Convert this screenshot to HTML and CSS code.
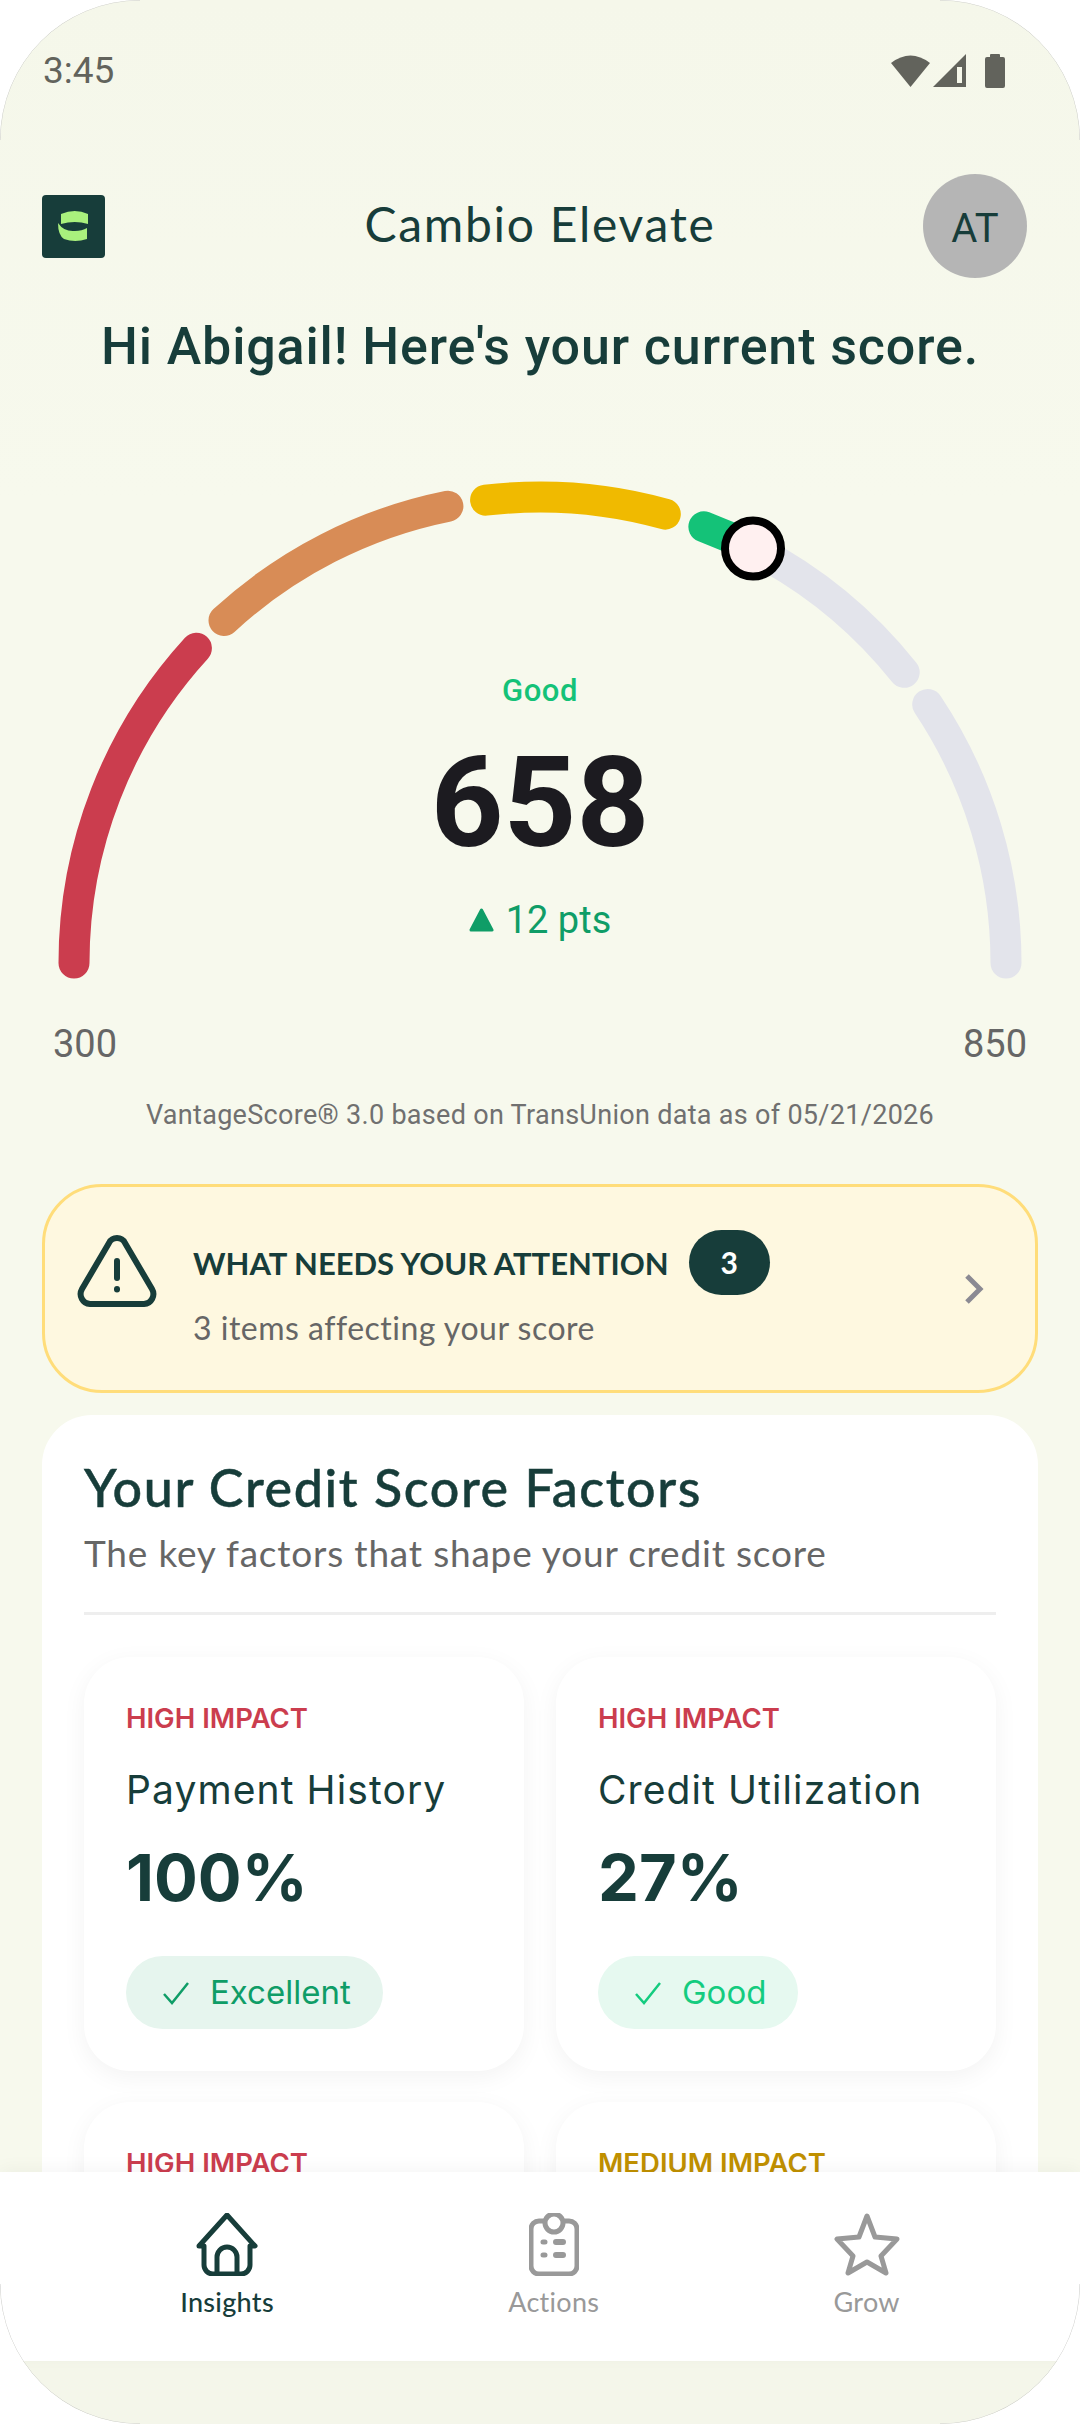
FILE: index.html
```html
<!DOCTYPE html>
<html lang="en">
  <head>
    <meta charset="UTF-8" />
    <meta name="viewport" content="width=device-width, initial-scale=1.0" />
    <title>Cambio Elevate</title>
    <link rel="stylesheet" href="styles.css">
  </head>
  <body>
    <div class="screen">
      <div class="scroll">
        <!-- status bar -->
        <div class="status-bar">
          <span class="time">3:45</span>
          <div class="status-icons">
            <svg class="icon-wifi" viewBox="0 0 39 33"><path d="M0 9 Q19.500 -6 39 9 L19.500 33 Z" /></svg>
            <svg class="icon-signal" viewBox="0 0 33 33">
              <path d="M33 0 V33 H0 Z" />
              <rect class="signal-gap" x="24" y="13" width="5" height="16" />
            </svg>
            <svg class="icon-battery" viewBox="0 0 20 34"><path d="M5 3 V1 a1 1 0 0 1 1 -1 h8 a1 1 0 0 1 1 1 v2 h3 a2 2 0 0 1 2 2 v27 a2 2 0 0 1 -2 2 H2 a2 2 0 0 1 -2 -2 V5 a2 2 0 0 1 2 -2 Z" /></svg>
          </div>
        </div>

        <!-- header -->
        <div class="top-bar">
          <svg class="logo" viewBox="0 0 63 63">
            <rect width="63" height="63" rx="4" fill="#173d3a" />
            <path d="M19 19 Q33 13 46 19 V29 Q33 25 19 29 Z" fill="#a9f07d" />
            <path d="M16 28 Q22 37 33 36 Q40 36 45 33 V44 Q33 48 22 44 Q16 40 16 28 Z" fill="#a9f07d" />
          </svg>
          <h1 class="app-title">Cambio Elevate</h1>
          <div class="avatar">AT</div>
        </div>

        <h2 class="greeting">Hi Abigail! Here's your current score.</h2>

        <!-- gauge -->
        <div class="gauge">
          <svg class="gauge-arc" viewBox="0 460 1080 540">
            <path class="seg" stroke="#cb3d4e" d="M74 963 A466 466 0 0 1 196.400 648.200" />
            <path class="seg" stroke="#d88c56" d="M224 620.500 A466 466 0 0 1 447.900 506.200" />
            <path class="seg" stroke="#f0ba00" d="M485.600 500.200 A466 466 0 0 1 665.300 514.100" />
            <path class="seg" stroke="#e3e4eb" d="M753 548.500 A466 466 0 0 1 904.200 672.300" />
            <path class="seg" stroke="#e3e4eb" d="M927.700 704.500 A466 466 0 0 1 1006 963" />
            <path class="seg" stroke="#14c278" d="M703.900 526.800 A466 466 0 0 1 753 548.500" />
            <circle cx="753" cy="548.500" r="28" fill="#fff0f0" stroke="#000" stroke-width="8" />
          </svg>
          <div class="gauge-center">
            <div class="gauge-label">Good</div>
            <div class="gauge-score">658</div>
            <div class="gauge-delta">
              <svg class="delta-arrow" viewBox="0 0 25 24"><path d="M12.500 2 L23 22 H2 Z" /></svg>
              <span>12 pts</span>
            </div>
          </div>
        </div>
        <div class="gauge-range">
          <span>300</span>
          <span>850</span>
        </div>
        <p class="gauge-note">VantageScore® 3.0 based on TransUnion data as of 05/21/2026</p>

        <!-- attention banner -->
        <div class="alert">
          <svg class="alert-icon" viewBox="0 0 82 73">
            <path d="M33 9 a9 9 0 0 1 16 0 L76 55 a10 10 0 0 1 -8 15 H14 a10 10 0 0 1 -8 -15 Z" />
            <path d="M41 27 V44" />
            <path d="M41 55 V55.500" />
          </svg>
          <div class="alert-text">
            <div class="alert-title">
              <span>WHAT NEEDS YOUR ATTENTION</span>
              <span class="badge">3</span>
            </div>
            <div class="alert-sub">3 items affecting your score</div>
          </div>
          <svg class="chevron" viewBox="0 0 20 31"><path d="M3 3 L16 16 L3 29" /></svg>
        </div>

        <!-- factors -->
        <div class="factors">
          <h3 class="factors-title">Your Credit Score Factors</h3>
          <p class="factors-sub">The key factors that shape your credit score</p>
          <div class="divider"></div>
          <div class="factor-grid">
            <div class="factor">
              <div class="impact high">HIGH IMPACT</div>
              <div class="factor-name">Payment History</div>
              <div class="factor-value">100%</div>
              <div class="chip chip-excellent">
                <svg class="check" viewBox="0 0 28 24"><path d="M2 13 L10 22 L26 2" /></svg>
                <span>Excellent</span>
              </div>
            </div>
            <div class="factor">
              <div class="impact high">HIGH IMPACT</div>
              <div class="factor-name">Credit Utilization</div>
              <div class="factor-value">27%</div>
              <div class="chip chip-good">
                <svg class="check" viewBox="0 0 28 24"><path d="M2 13 L10 22 L26 2" /></svg>
                <span>Good</span>
              </div>
            </div>
            <div class="factor">
              <div class="impact high">HIGH IMPACT</div>
            </div>
            <div class="factor">
              <div class="impact medium">MEDIUM IMPACT</div>
            </div>
          </div>
        </div>
      </div>

      <!-- bottom nav -->
      <nav class="bottom-nav">
        <div class="nav-item active">
          <svg class="nav-icon" viewBox="0 0 62 63">
            <path d="M3 33 L31 2 L59 33 H54 V52 a9 9 0 0 1 -9 9 H17 a9 9 0 0 1 -9 -9 V33 Z" />
            <path d="M21 61 V44 a10 10 0 0 1 20 0 V61" />
          </svg>
          <span>Insights</span>
        </div>
        <div class="nav-item">
          <svg class="nav-icon" viewBox="0 0 50 63">
            <path d="M14 8 H10 a8 8 0 0 0 -8 8 V53 a8 8 0 0 0 8 8 H40 a8 8 0 0 0 8 -8 V16 a8 8 0 0 0 -8 -8 H36" />
            <circle cx="25" cy="10" r="9" />
            <path d="M14 29 H16 M14 42 H16" />
            <path d="M27 29 H34 M27 42 H34" stroke-width="6" />
          </svg>
          <span>Actions</span>
        </div>
        <div class="nav-item">
          <svg class="nav-icon" viewBox="0 0 66 63">
            <path d="M33 3 L41 24 L63 26 L47 43 L52 60 L33 49 L14 60 L19 43 L3 26 L25 24 Z" />
          </svg>
          <span>Grow</span>
        </div>
      </nav>
      <div class="gesture-bar"></div>

      <!-- hairline of the device frame at the corners -->
      <svg class="frame-edge" viewBox="0 0 1080 2424">
        <path class="edge-line" d="M0 140 A140 140 0 0 1 140 0 M940 0 A140 140 0 0 1 1080 140 M1080 2284 A140 140 0 0 1 940 2424 M140 2424 A140 140 0 0 1 0 2284" />
      </svg>
    </div>
  </body>
</html>
```

FILE: styles.css
```css
* {
  margin: 0;
  padding: 0;
  box-sizing: border-box;
}
body {
  background-color: #fff;
  font-family: "Roboto", sans-serif;
}
.screen {
  position: relative;
  width: 1080px;
  height: 2424px;
  display: flex;
  flex-direction: column;
  overflow: hidden;
  border-radius: 140px;
  background: linear-gradient(#f5f7ea, #f7f9ed 500px);
}
.scroll {
  flex: 1;
  min-height: 0;
  overflow: hidden;
}
.frame-edge {
  position: absolute;
  top: 0;
  left: 0;
  width: 1080px;
  height: 2424px;
  fill: none;
  pointer-events: none;
}
.edge-line {
  stroke: #c4c4c4;
  stroke-width: 0.8;
}

/* ===status bar=== */
.status-bar {
  height: 174px;
  padding: 52px 75px 0 43px;
  display: flex;
  justify-content: space-between;
  align-items: flex-start;
}
.time {
  font-size: 37px;
  line-height: 37px;
  color: #62635c;
}
.status-icons {
  display: flex;
  gap: 3px;
  margin-top: 2px;
  fill: #62635c;
}
.icon-wifi {
  width: 39px;
  height: 33px;
}
.icon-signal {
  width: 33px;
  height: 33px;
}
.signal-gap {
  fill: #f5f7ea;
}
.icon-battery {
  width: 20px;
  height: 34px;
  margin-left: 16px;
}

/* ===header=== */
.top-bar {
  height: 104px;
  padding: 0 53px 0 42px;
  display: grid;
  grid-template-columns: 1fr auto 1fr;
  align-items: center;
}
.logo {
  width: 63px;
  height: 63px;
}
.app-title {
  padding: 0 0 6px 11px;
  font-family: "Lato", sans-serif;
  font-size: 48px;
  font-weight: 400;
  letter-spacing: 1.7px;
  color: #173d3a;
}
.avatar {
  justify-self: end;
  width: 104px;
  height: 104px;
  padding-top: 5px;
  border-radius: 50%;
  background-color: #b5b5b5;
  display: flex;
  justify-content: center;
  align-items: center;
  font-size: 40px;
  color: #173d3a;
}
.greeting {
  margin-top: 39px;
  font-size: 52px;
  line-height: 60px;
  font-weight: 500;
  letter-spacing: 0.87px;
  text-align: center;
  color: #173d3a;
}

/* ===gauge=== */
.gauge {
  position: relative;
  margin-top: 83px;
}
.gauge-arc {
  display: block;
  width: 1080px;
  height: 540px;
}
.seg {
  fill: none;
  stroke-width: 31;
  stroke-linecap: round;
}
.gauge-center {
  position: absolute;
  top: 211px;
  left: 0;
  right: 0;
  display: flex;
  flex-direction: column;
  align-items: center;
}
.gauge-label {
  font-size: 31px;
  line-height: 40px;
  font-weight: 500;
  letter-spacing: 0.5px;
  color: #14c278;
}
.gauge-score {
  margin-top: 27px;
  font-size: 127px;
  line-height: 130px;
  font-weight: 700;
  color: #1c1b20;
}
.gauge-delta {
  margin-top: 30px;
  display: flex;
  align-items: center;
  gap: 12px;
  font-size: 38px;
  line-height: 44px;
  color: #0f9d67;
}
.delta-arrow {
  width: 25px;
  height: 24px;
  fill: #0f9d67;
  stroke: #0f9d67;
  stroke-width: 3;
  stroke-linejoin: round;
}
.gauge-range {
  margin-top: 23px;
  padding: 0 53px;
  display: flex;
  justify-content: space-between;
  font-size: 38px;
  line-height: 42px;
  color: #666;
}
.gauge-note {
  margin-top: 33px;
  font-size: 27px;
  line-height: 34px;
  letter-spacing: 0.3px;
  text-align: center;
  color: #707070;
}

/* ===attention banner=== */
.alert {
  margin: 52px 42px 0;
  height: 209px;
  padding: 0 51px 0 31px;
  display: flex;
  align-items: center;
  border: 3px solid #ffdd7a;
  border-radius: 60px;
  background-color: #fef8e0;
}
.alert-icon {
  width: 82px;
  height: 73px;
  flex: none;
  margin-bottom: 36px;
  fill: none;
  stroke: #173d3a;
  stroke-width: 6;
  stroke-linecap: round;
  stroke-linejoin: round;
}
.alert-text {
  flex: 1;
  margin-left: 35px;
  font-family: "Lato", sans-serif;
}
.alert-title {
  display: flex;
  align-items: center;
  gap: 20px;
  font-size: 31px;
  font-weight: 700;
  color: #173d3a;
}
.badge {
  width: 81px;
  height: 65px;
  border-radius: 33px;
  background-color: #173d3a;
  display: flex;
  justify-content: center;
  align-items: center;
  font-size: 30px;
  color: #fff;
  margin-top: -2px;
}
.alert-sub {
  margin-top: 15px;
  font-size: 32px;
  line-height: 36px;
  letter-spacing: 0.5px;
  color: #666;
}
.chevron {
  width: 20px;
  height: 31px;
  fill: none;
  stroke: #8b8a93;
  stroke-width: 5;
}

/* ===factors=== */
.factors {
  margin: 22px 42px 0;
  padding: 42px 42px 0;
  border-radius: 50px;
  background-color: #fff;
}
.factors-title {
  font-family: "Lato", sans-serif;
  font-size: 52px;
  line-height: 60px;
  font-weight: 500;
  letter-spacing: 1.6px;
  -webkit-text-stroke: 0.5px #173d3a;
  color: #173d3a;
}
.factors-sub {
  margin-top: 14px;
  font-family: "Lato", sans-serif;
  font-size: 37px;
  line-height: 44px;
  letter-spacing: 0.8px;
  color: #666;
}
.divider {
  margin-top: 37px;
  height: 3px;
  background-color: #eee;
}
.factor-grid {
  margin-top: 42px;
  display: grid;
  grid-template-columns: 440px 440px;
  gap: 31px 32px;
}
.factor {
  height: 414px;
  padding: 44px 42px 0;
  border-radius: 46px;
  background-color: #fff;
  box-shadow: 0 6px 24px rgba(0, 0, 0, 0.05);
  font-family: "Inter", sans-serif;
}
.impact {
  font-size: 27.500px;
  line-height: 34px;
  font-weight: 600;
}
.high {
  color: #cb3d4e;
}
.medium {
  color: #c09000;
}
.factor-name {
  margin-top: 31px;
  font-size: 39px;
  line-height: 48px;
  letter-spacing: 1.100px;
  color: #173d3a;
}
.factor-value {
  margin-top: 24px;
  font-size: 65px;
  line-height: 80px;
  font-weight: 700;
  color: #173d3a;
}
.chip {
  margin-top: 38px;
  height: 73px;
  width: fit-content;
  padding: 0 32px 2px 36px;
  border-radius: 37px;
  display: flex;
  align-items: center;
  gap: 20px;
  font-size: 33px;
}
.chip-excellent {
  background-color: #e6f5ee;
  color: #0f9d67;
}
.chip-good {
  background-color: #e6f9f0;
  color: #14cc7f;
}
.check {
  width: 28px;
  height: 24px;
  margin-top: 2px;
  fill: none;
  stroke: currentColor;
  stroke-width: 2.5;
}

/* ===bottom nav=== */
.bottom-nav {
  flex: none;
  height: 189px;
  padding: 41px 63px 0 63px;
  display: flex;
  justify-content: space-around;
  align-items: flex-start;
  background-color: #fff;
  box-shadow: 0 -4px 16px rgba(0, 0, 0, 0.04);
  position: relative;
}
.nav-item {
  display: flex;
  flex-direction: column;
  align-items: center;
  gap: 9px;
  font-family: "Lato", sans-serif;
  font-size: 27px;
  line-height: 34px;
  letter-spacing: 0.3px;
  color: #999;
}
.nav-item.active {
  color: #173d3a;
  font-weight: 500;
}
.nav-icon {
  height: 63px;
  fill: none;
  stroke: currentColor;
  stroke-width: 5;
  stroke-linejoin: round;
  stroke-linecap: round;
}
.gesture-bar {
  flex: none;
  height: 63px;
  background-color: #f4f6ea;
}
```
